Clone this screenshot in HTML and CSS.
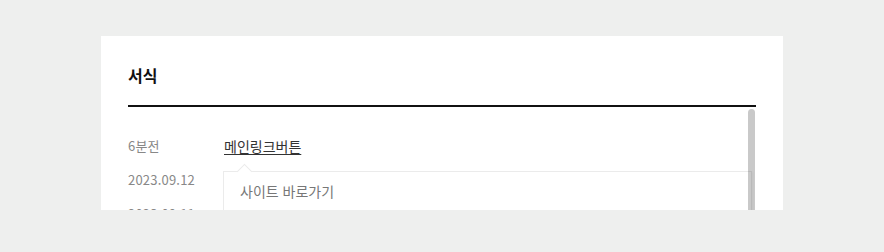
FILE: index.html
```html
<!DOCTYPE html>
<html lang="ko">
<head>
<meta charset="UTF-8" />
<meta name="viewport" content="width=device-width, initial-scale=1" />
<title>서식</title>
<link rel="stylesheet" href="styles.css">
</head>
<body>
  <div class="board">
    <div class="board-head">
      <h2>서식</h2>
    </div>

    <div class="board-body">
      <ul class="posts">
        <li>
          <span class="date">6분전</span>
          <span class="link-wrap">
            <a href="#" class="post-link">메인링크버튼</a>
            <div class="popover">
              <span class="popover-arrow"></span>
              <a href="#">사이트 바로가기</a>
            </div>
          </span>
        </li>
        <li>
          <span class="date">2023.09.12</span>
          <a href="#" class="post-link">공지사항</a>
        </li>
        <li>
          <span class="date">2023.09.11</span>
          <a href="#" class="post-link">자료실</a>
        </li>
        <li>
          <span class="date">2023.09.10</span>
          <a href="#" class="post-link">문의하기</a>
        </li>
      </ul>
      <div class="scroll-thumb"></div>
    </div>
  </div>
</body>
</html>
```

FILE: styles.css
```css
body {
  font-family: "Noto Sans CJK KR", "Noto Sans", sans-serif;
  background: #eeefee;
  margin: 0;
  padding: 36px 0 0 101px;
}
.board {
  width: 682px;
  height: 174px;
  background: #fff;
  padding: 0 27px;
  box-sizing: border-box;
  overflow: hidden;
}
.board-head {
  padding: 28px 0 19px;
  border-bottom: 2px solid #111;
}
.board-head h2 {
  margin: 0;
  font-size: 16px;
  line-height: 22px;
  font-weight: 700;
  color: #111;
}
.board-body {
  position: relative;
  margin-top: 2px;
}
.posts {
  list-style: none;
  margin: 0;
  padding: 20px 0 0;
}
.posts li {
  display: flex;
  height: 34px;
  align-items: center;
  font-size: 13px;
  line-height: 18px;
}
.posts .date {
  width: 96px;
  color: #888;
  letter-spacing: 0.2px;
}
.post-link {
  color: #333;
  font-size: 14px;
  text-decoration: underline;
  text-underline-offset: 2px;
}
.link-wrap {
  position: relative;
}
.popover {
  position: absolute;
  top: 34px;
  left: -1px;
  width: 529px;
  height: 120px;
  box-sizing: border-box;
  padding: 10px 16px;
  background: #fff;
  border: 1px solid #ebebeb;
  box-shadow: 1px 1px 2px rgba(0, 0, 0, 0.04);
  z-index: 2;
}
.popover a {
  color: #777;
  text-decoration: none;
  font-size: 14px;
  line-height: 18px;
}
.popover-arrow {
  position: absolute;
  top: -6px;
  left: 15px;
  width: 10px;
  height: 10px;
  background: #fff;
  border-top: 1px solid #ebebeb;
  border-left: 1px solid #ebebeb;
  transform: rotate(45deg);
}
.scroll-thumb {
  position: absolute;
  top: 0;
  right: 1px;
  width: 7px;
  height: 200px;
  border-radius: 4px 4px 0 0;
  background: rgba(0, 0, 0, 0.21);
  z-index: 3;
}
```
